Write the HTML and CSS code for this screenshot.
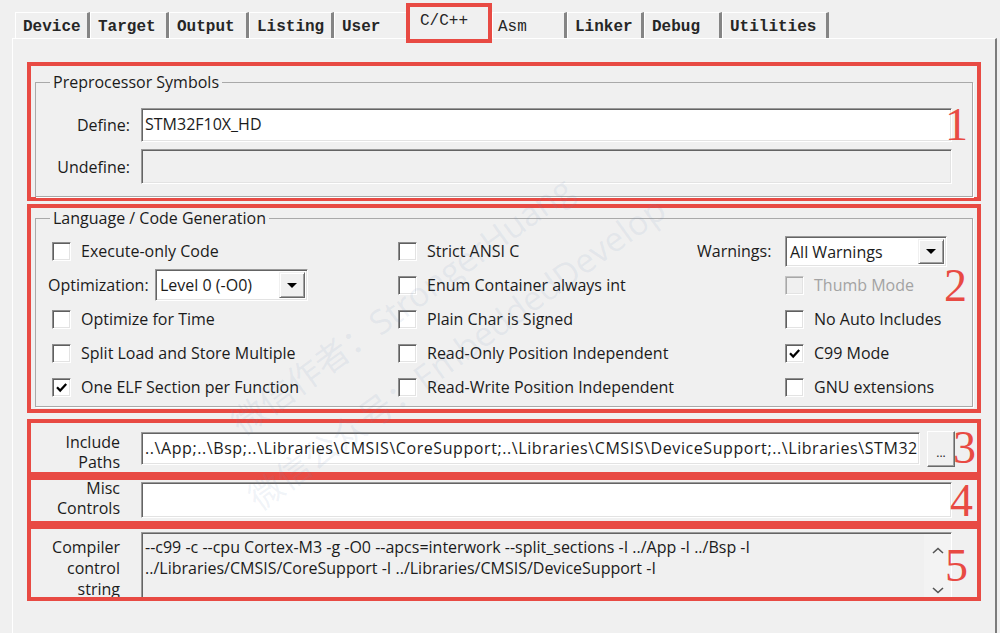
FILE: index.html
```html
<!DOCTYPE html>
<html lang="en">
<head>
<meta charset="utf-8">
<title>Options for Target - C/C++</title>
<link rel="stylesheet" href="styles.css">
</head>
<body>
<div class="app">
  <nav class="tabs">
    <div class="tab">Device</div>
    <div class="tab">Target</div>
    <div class="tab">Output</div>
    <div class="tab">Listing</div>
    <div class="tab tab-before-active">User</div>
    <div class="tab active">C/C++</div>
    <div class="tab light">Asm</div>
    <div class="tab">Linker</div>
    <div class="tab">Debug</div>
    <div class="tab">Utilities</div>
  </nav>

  <main class="panel">
    <section class="box box-pre">
      <fieldset class="group group-pre">
        <legend>Preprocessor Symbols</legend>
        <div class="field-row">
          <label class="lbl">Define:</label>
          <div class="input">STM32F10X_HD</div>
        </div>
        <div class="field-row">
          <label class="lbl">Undefine:</label>
          <div class="input input-off"></div>
        </div>
      </fieldset>
      <span class="mark mark-1">1</span>
    </section>

    <section class="box box-lang">
      <fieldset class="group group-lang">
        <legend>Language / Code Generation</legend>
        <div class="opts">
          <div class="opt ind-s"><span class="cb"></span><span>Execute-only Code</span></div>
          <div class="opt">
            <span class="opt-lbl">Optimization:</span>
            <div class="combo combo-opt"><span class="val">Level 0 (-O0)</span><span class="drop"><i class="arrow"></i></span></div>
          </div>
          <div class="opt ind-s"><span class="cb"></span><span>Optimize for Time</span></div>
          <div class="opt ind-s"><span class="cb"></span><span>Split Load and Store Multiple</span></div>
          <div class="opt ind-s"><span class="cb checked"><svg viewBox="0 0 15 15"><path d="M3 7.2l3.2 3.4L12.2 4"/></svg></span><span>One ELF Section per Function</span></div>

          <div class="opt"><span class="cb"></span><span>Strict ANSI C</span></div>
          <div class="opt"><span class="cb"></span><span>Enum Container always int</span></div>
          <div class="opt"><span class="cb"></span><span>Plain Char is Signed</span></div>
          <div class="opt"><span class="cb"></span><span>Read-Only Position Independent</span></div>
          <div class="opt"><span class="cb"></span><span>Read-Write Position Independent</span></div>

          <div class="opt">
            <span class="warn-lbl">Warnings:</span>
            <div class="combo combo-warn"><span class="val">All Warnings</span><span class="drop"><i class="arrow"></i></span></div>
          </div>
          <div class="opt ind-l disabled"><span class="cb"></span><span>Thumb Mode</span></div>
          <div class="opt ind-l"><span class="cb"></span><span>No Auto Includes</span></div>
          <div class="opt ind-l"><span class="cb checked"><svg viewBox="0 0 15 15"><path d="M3 7.2l3.2 3.4L12.2 4"/></svg></span><span>C99 Mode</span></div>
          <div class="opt ind-l"><span class="cb"></span><span>GNU extensions</span></div>
        </div>
      </fieldset>
      <span class="mark mark-2">2</span>
    </section>

    <section class="box box-inc">
      <label class="side-lbl">Include<br>Paths</label>
      <div class="input input-inc">..\App;..\Bsp;..\Libraries\CMSIS\CoreSupport;..\Libraries\CMSIS\DeviceSupport;..\Libraries\STM32</div>
      <button class="dots">...</button>
      <span class="mark mark-3">3</span>
    </section>

    <section class="box box-misc">
      <label class="side-lbl">Misc<br>Controls</label>
      <div class="input input-misc"></div>
      <span class="mark mark-4">4</span>
    </section>

    <section class="box box-cc">
      <label class="side-lbl">Compiler<br>control<br>string</label>
      <div class="textarea">
        <div class="ta-text">--c99 -c --cpu Cortex-M3 -g -O0 --apcs=interwork --split_sections -I ../App -I ../Bsp -I<br>../Libraries/CMSIS/CoreSupport -I ../Libraries/CMSIS/DeviceSupport -I</div>
        <div class="ta-scroll">
          <svg class="chev" viewBox="0 0 12 7"><path d="M1 6L6 1.5L11 6"/></svg>
          <svg class="chev" viewBox="0 0 12 7"><path d="M1 1L6 5.5L11 1"/></svg>
        </div>
      </div>
      <span class="mark mark-5">5</span>
    </section>

    <div class="wm wm-a">微信作者：StrongerHuang</div>
    <div class="wm wm-b">微信公众号：EmbeddedDevelop</div>
  </main>
</div>
</body>
</html>
```

FILE: styles.css
```css
html, body {
  margin: 0;
  padding: 0;
}

body {
  background: #f0f0f0;
  font-family: "Open Sans", "Noto Sans", sans-serif;
  font-size: 16px;
  color: #1b1b1b;
  overflow: hidden;
  width: 1000px;
  height: 633px;
}

/* ---------- tabs ---------- */
.tabs {
  display: flex;
  align-items: flex-start;
  height: 26px;
  margin: 12px 0 0 15px;
}

.tab {
  box-sizing: border-box;
  height: 26px;
  padding: 2px 0 0 7px;
  border-top: 1px solid #ffffff;
  border-left: 1px solid #ffffff;
  border-right: 3px solid #858585;
  font-family: "Liberation Mono", "DejaVu Sans Mono", monospace;
  font-weight: bold;
  font-size: 16px;
  line-height: 24px;
  color: #262626;
  white-space: nowrap;
}

.tab:nth-child(1) { width: 75px; }
.tab:nth-child(2) { width: 79px; }
.tab:nth-child(3) { width: 80px; }
.tab:nth-child(4) { width: 85px; }
.tab:nth-child(5) { width: 72px; }
.tab:nth-child(6) { width: 86px; }
.tab:nth-child(7) { width: 75px; }
.tab:nth-child(8) { width: 77px; }
.tab:nth-child(9) { width: 78px; }
.tab:nth-child(10) { width: 107px; }

.tab-before-active {
  border-right: none;
}

.tab.light {
  font-weight: normal;
  padding-left: 5px;
}

.tab.active {
  position: relative;
  z-index: 3;
  height: 40px;
  margin-top: -9px;
  padding: 0 0 0 10px;
  border: 4px solid #e84a43;
  background: #f0f0f0;
  font-weight: normal;
  line-height: 29px;
}

/* ---------- panel ---------- */
.panel {
  position: relative;
  box-sizing: border-box;
  width: 985px;
  height: 620px;
  margin-left: 12px;
  padding: 23px 0 0 14px;
  border-top: 1px solid #ffffff;
  border-left: 1px solid #ffffff;
  border-right: 2px solid #7c7c7c;
}

.box {
  position: relative;
  box-sizing: border-box;
  width: 954px;
  border: 4px solid #e84a43;
}

.box-pre { height: 139px; }
.box-lang { height: 209px; margin-top: 3px; }
.box-inc { height: 57px; margin-top: 6px; }
.box-misc { height: 49px; }
.box-cc { height: 76px; overflow: hidden; }

/* ---------- group boxes ---------- */
.group {
  margin: 0 4px;
  min-width: 0;
  padding: 0 20px 0 12px;
  border: 1px solid #a9a9a9;
  box-shadow: 1px 1px 0 #ffffff;
}

.group legend {
  margin-left: 2px;
  padding: 0 3px;
  font-size: 16px;
  line-height: 20px;
  color: #1b1b1b;
}

.group-pre {
  margin-top: 6px;
  padding-top: 16px;
  padding-bottom: 12px;
}

.group-lang {
  padding-top: 6px;
  padding-bottom: 2px;
}

.field-row {
  display: flex;
  align-items: center;
}

.field-row + .field-row {
  margin-top: 7px;
}

.lbl {
  width: 82px;
  margin-right: 11px;
  text-align: right;
  line-height: 20px;
}

/* ---------- inputs ---------- */
.input {
  box-sizing: border-box;
  height: 34px;
  flex: 1;
  min-width: 0;
  padding-left: 3px;
  background: #ffffff;
  border: 1px solid;
  border-color: #9a9a9a #ffffff #ffffff #9a9a9a;
  box-shadow: inset 1px 1px 0 #646464, inset -1px -1px 0 #e3e3e3;
  line-height: 31px;
  white-space: nowrap;
  overflow: hidden;
}

.field-row + .field-row .input {
  height: 35px;
}

.input-off {
  background: #f0f0f0;
}

/* ---------- option grid ---------- */
.opts {
  display: grid;
  grid-template-columns: 350px 299px 1fr;
  grid-template-rows: repeat(5, 34px);
  grid-auto-flow: column;
}

.opt {
  display: flex;
  align-items: center;
  gap: 10px;
  line-height: 20px;
  white-space: nowrap;
}

.opt-lbl {
  flex: none;
  width: 97px;
}

.ind-s { padding-left: 4px; }
.ind-l { padding-left: 88px; }

.opt.disabled {
  color: #a3a3a3;
}

.cb {
  box-sizing: border-box;
  flex: none;
  width: 19px;
  height: 19px;
  background: #ffffff;
  border: 1px solid;
  border-color: #8e8e8e #ffffff #ffffff #8e8e8e;
  box-shadow: inset 1px 1px 0 #5f5f5f, inset -1px -1px 0 #e3e3e3;
  display: flex;
  align-items: center;
  justify-content: center;
}

.disabled .cb {
  background: #f0f0f0;
  border-color: #c4c4c4 #ffffff #ffffff #c4c4c4;
  box-shadow: inset 1px 1px 0 #a8a8a8, inset -1px -1px 0 #e3e3e3;
}

.cb svg {
  width: 15px;
  height: 15px;
}

.cb svg path {
  fill: none;
  stroke: #000000;
  stroke-width: 2.2;
}

.warn-lbl {
  flex: none;
  width: 78px;
}

.combo {
  box-sizing: border-box;
  flex: none;
  display: flex;
  background: #ffffff;
  border: 1px solid;
  border-color: #9a9a9a #ffffff #ffffff #9a9a9a;
  box-shadow: inset 1px 1px 0 #646464, inset -1px -1px 0 #e3e3e3;
  padding: 2px;
}

.combo-opt {
  width: 153px;
  height: 32px;
}

.combo-warn {
  width: 162px;
  height: 31px;
}

.combo .val {
  flex: 1;
  padding-left: 2px;
  line-height: 26px;
  white-space: nowrap;
  overflow: hidden;
}

.combo .drop {
  box-sizing: border-box;
  width: 26px;
  background: #f0f0f0;
  border: 1px solid;
  border-color: #f0f0f0 #696969 #696969 #f0f0f0;
  box-shadow: inset 1px 1px 0 #ffffff, inset -1px -1px 0 #a0a0a0;
  display: flex;
  align-items: center;
  justify-content: center;
}

.arrow {
  display: block;
  width: 0;
  height: 0;
  border-left: 5px solid transparent;
  border-right: 5px solid transparent;
  border-top: 5px solid #000000;
}

/* ---------- lower boxes ---------- */
.box-inc,
.box-misc,
.box-cc {
  display: flex;
  align-items: flex-start;
}

.side-lbl {
  flex: none;
  width: 89px;
  margin-right: 21px;
  text-align: right;
  line-height: 20px;
}

.box-inc .side-lbl { margin-top: 9px; }

.input-inc {
  flex: none;
  width: 779px;
  height: 33px;
  margin-top: 9px;
  line-height: 30px;
  letter-spacing: 0.58px;
}

.dots {
  box-sizing: border-box;
  flex: none;
  width: 28px;
  height: 36px;
  margin: 8px 0 0 7px;
  padding: 8px 0 0 0;
  background: #f0f0f0;
  border: 1px solid;
  border-color: #ffffff #696969 #696969 #ffffff;
  box-shadow: inset -1px -1px 0 #a0a0a0;
  font-family: "Open Sans", sans-serif;
  font-size: 12px;
  line-height: 14px;
  color: #222222;
}

.box-misc .side-lbl { margin-top: -2px; }

.input-misc {
  flex: none;
  width: 811px;
  height: 36px;
  margin-top: 2px;
}

.box-cc .side-lbl {
  margin-top: 8px;
  line-height: 21px;
}

.textarea {
  box-sizing: border-box;
  flex: none;
  display: flex;
  width: 811px;
  height: 80px;
  margin-top: 3px;
  background: #f0f0f0;
  border: 1px solid;
  border-color: #9a9a9a #ffffff #ffffff #9a9a9a;
  box-shadow: inset 1px 1px 0 #646464;
}

.ta-text {
  flex: 1;
  padding: 4px 0 0 3px;
  line-height: 21px;
  white-space: nowrap;
  overflow: hidden;
}

.ta-scroll {
  box-sizing: border-box;
  width: 27px;
  height: 64px;
  margin-top: 1px;
  padding: 13px 0 4px;
  background: #f3f3f3;
  display: flex;
  flex-direction: column;
  justify-content: space-between;
  align-items: center;
}

.chev {
  width: 12px;
  height: 7px;
}

.chev path {
  fill: none;
  stroke: #555555;
  stroke-width: 1.6;
}

/* ---------- annotation numbers ---------- */
.mark {
  position: absolute;
  font-family: "Liberation Serif", "Times New Roman", serif;
  font-size: 46px;
  line-height: 1;
  color: #e84a43;
}

.mark-1 { left: 914px; top: 36px; }
.mark-2 { left: 913px; top: 55px; }
.mark-3 { left: 922px; top: 2px; }
.mark-4 { left: 919px; top: -2px; }
.mark-5 { left: 914px; top: 14px; }

/* ---------- watermark ---------- */
.wm {
  position: absolute;
  white-space: nowrap;
  font-family: "Open Sans", "Noto Sans CJK SC", sans-serif;
  font-size: 34px;
  line-height: 34px;
  color: rgba(110, 140, 185, 0.1);
  transform: rotate(-36deg);
  transform-origin: 0 100%;
  pointer-events: none;
}

.wm-a { left: 232px; top: 367px; }
.wm-b { left: 249px; top: 442px; }
```
